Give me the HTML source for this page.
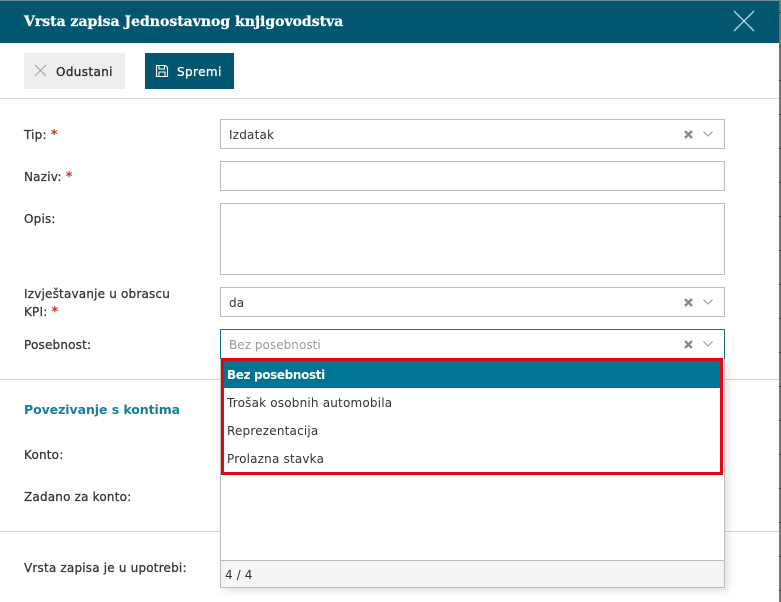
<!DOCTYPE html>
<html><head><meta charset="utf-8">
<style>
html,body{margin:0;padding:0;background:#fff;}
#p{position:relative;width:781px;height:602px;overflow:hidden;background:#fff;font-family:"DejaVu Sans","Liberation Sans",sans-serif;font-size:12px;color:#333;}
#p div,#p svg{position:absolute;}
.t{white-space:nowrap;letter-spacing:.19px;line-height:16px;}
.l{left:24px;-webkit-text-stroke:.25px #333;}
.s{left:220px;width:503px;border:1px solid #bdbdbd;background:#fff;}
.line{left:0;width:779px;height:1px;background:#d6d6d6;}
b.r{color:#c9302c;font-weight:700;font-size:13px;line-height:0;-webkit-text-stroke:0;}
</style></head><body>
<div id="p">
<div style="left:0;top:0;width:779px;height:43px;background:#03566f;border-top:1px solid #6d8b96;box-sizing:border-box;"></div>
<div class="t" style="left:24px;top:14px;color:#fff;font-family:'DejaVu Serif','Liberation Serif',serif;font-weight:700;font-size:14px;letter-spacing:0;-webkit-text-stroke:.3px #fff;">Vrsta zapisa Jednostavnog knjigovodstva</div>
<svg style="left:733px;top:10px" width="22" height="22" viewBox="0 0 22 22"><path d="M1 1L21 21M21 1L1 21" stroke="#b5d5de" stroke-width="1.3" fill="none"/></svg>
<div style="left:24px;top:53px;width:101px;height:36px;background:#eee;"></div>
<svg style="left:34px;top:64px" width="13" height="13" viewBox="0 0 13 13"><path d="M1 1L12 12M12 1L1 12" stroke="#a5a5a5" stroke-width="1.2" fill="none"/></svg>
<div class="t" style="left:56px;top:64px;color:#2b2b2b;letter-spacing:.37px;-webkit-text-stroke:.3px #2b2b2b;">Odustani</div>
<div style="left:145px;top:53px;width:89px;height:36px;background:#03566f;"></div>
<svg style="left:155px;top:64px" width="14" height="14" viewBox="0 0 14 14"><path d="M1.500 1.500H10.500L12.500 3.500V12.500H1.500Z M4 1.500V5H9.500V1.500 M4 12.500V8H10V12.500" stroke="#fff" stroke-width="1.100" fill="none"/></svg>
<div class="t" style="left:177px;top:64px;color:#fff;letter-spacing:.4px;-webkit-text-stroke:.3px #fff;">Spremi</div>
<div class="line" style="top:98px"></div>

<div class="t l" style="top:127px">Tip: <b class="r">*</b></div>
<div class="s" style="top:119px;height:28px"></div>
<div class="t" style="left:229px;top:127px">Izdatak</div>
<div class="t l" style="top:169px">Naziv: <b class="r">*</b></div>
<div class="s" style="top:161px;height:28px"></div>
<div class="t l" style="top:211px">Opis:</div>
<div class="s" style="top:203px;height:70px"></div>
<div class="t l" style="top:286px">Izvještavanje u obrascu</div>
<div class="t l" style="top:304px">KPI: <b class="r">*</b></div>
<div class="s" style="top:287px;height:28px"></div>
<div class="t" style="left:229px;top:295px">da</div>
<div class="t l" style="top:337px">Posebnost:</div>
<div class="s" style="top:329px;height:29px;border-color:#1b6b85;border-bottom:0"></div>
<div class="t" style="left:229px;top:337px;color:#9a9a9a;letter-spacing:.04px">Bez posebnosti</div>

<svg style="left:684px;top:130px" width="9" height="9" viewBox="0 0 9 9"><path d="M1 1L8 8M8 1L1 8" stroke="#8a8a8a" stroke-width="2.300" fill="none"/></svg>
<svg style="left:702px;top:130px" width="12" height="8" viewBox="0 0 12 8"><path d="M1.500 1.500L6 6L10.500 1.500" stroke="#999" stroke-width="1" fill="none"/></svg>
<svg style="left:684px;top:298px" width="9" height="9" viewBox="0 0 9 9"><path d="M1 1L8 8M8 1L1 8" stroke="#8a8a8a" stroke-width="2.300" fill="none"/></svg>
<svg style="left:702px;top:298px" width="12" height="8" viewBox="0 0 12 8"><path d="M1.500 1.500L6 6L10.500 1.500" stroke="#999" stroke-width="1" fill="none"/></svg>
<svg style="left:684px;top:340px" width="9" height="9" viewBox="0 0 9 9"><path d="M1 1L8 8M8 1L1 8" stroke="#8a8a8a" stroke-width="2.300" fill="none"/></svg>
<svg style="left:702px;top:340px" width="12" height="8" viewBox="0 0 12 8"><path d="M1.500 1.500L6 6L10.500 1.500" stroke="#999" stroke-width="1" fill="none"/></svg>

<div class="line" style="top:379px"></div>
<div class="t l" style="top:402px;color:#177e95;font-weight:700;font-size:12.500px;letter-spacing:-.07px;-webkit-text-stroke:0;">Povezivanje s kontima</div>
<div class="t l" style="top:447px">Konto:</div>
<div class="t l" style="top:489px">Zadano za konto:</div>
<div class="line" style="top:531px"></div>
<div class="t l" style="top:560px">Vrsta zapisa je u upotrebi:</div>

<div style="left:220px;top:359px;width:503px;height:228px;background:#fff;border:1px solid #bdbdbd;border-top:0;box-shadow:3px 3px 8px rgba(0,0,0,.12);"></div>
<div style="left:221px;top:560px;width:503px;height:27px;background:#f5f5f5;border-top:1px solid #bdbdbd;box-sizing:border-box;"></div>
<div class="t" style="left:225px;top:567px;letter-spacing:.1px">4 / 4</div>
<div style="left:224px;top:361px;width:499px;height:27px;background:#007495;"></div>
<div style="left:221px;top:358px;width:496px;height:111px;border:3px solid #dc0a12;"></div>
<div class="t" style="left:227px;top:367px;color:#fff;font-weight:700;letter-spacing:-.36px;">Bez posebnosti</div>
<div class="t" style="left:227px;top:395px">Trošak osobnih automobila</div>
<div class="t" style="left:227px;top:423px">Reprezentacija</div>
<div class="t" style="left:227px;top:451px">Prolazna stavka</div>

<div style="left:779px;top:0;width:2px;height:602px;background:repeating-linear-gradient(to bottom,#3f3f3f 0,#3f3f3f 1px,#757575 1px,#757575 34px) 0 12px;"></div>
</div>
</body></html>
